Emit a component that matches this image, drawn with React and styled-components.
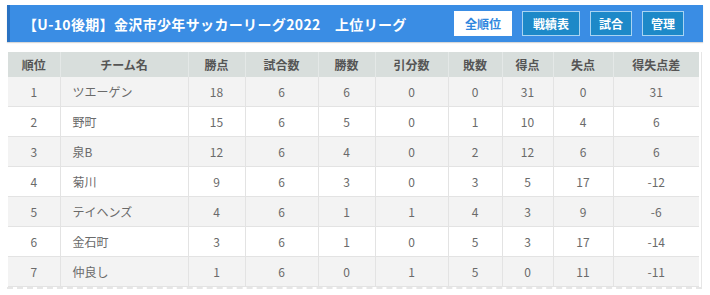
import React from "react";
import styled, { createGlobalStyle } from "styled-components";

const GlobalStyle = createGlobalStyle`
  html, body { margin: 0; padding: 0; background: #ffffff; }
  body { font-family: "Noto Sans CJK JP", "Noto Sans", sans-serif; }
`;

const Page = styled.div`
  padding: 5px 7px 0 7px;
  width: 696px;
`;

const HeaderBar = styled.div`
  display: flex;
  align-items: center;
  justify-content: space-between;
  height: 37px;
  box-sizing: border-box;
  background: #3a8de4;
  border-left: 3px solid #2a72c2;
  box-shadow: 0 1px 1px rgba(0, 0, 0, 0.15);
  padding: 0 19px 0 13px;
`;

const Title = styled.h1`
  margin: 0;
  font-size: 14px;
  font-weight: 700;
  color: #ffffff;
  letter-spacing: 0.35px;
  white-space: pre;
`;

const Nav = styled.div`
  display: flex;
  gap: 10px;
  align-items: center;
`;

const NavButton = styled.span`
  display: inline-flex;
  align-items: center;
  justify-content: center;
  height: 25px;
  box-sizing: border-box;
  padding: 0 ${(p) => (p.$short ? 8 : 10)}px;
  font-size: 12px;
  font-weight: 700;
  border: 1px solid ${(p) => (p.$active ? "#ffffff" : "#a9d4f2")};
  background: ${(p) => (p.$active ? "#ffffff" : "#1d89c8")};
  color: ${(p) => (p.$active ? "#2e86de" : "#ffffff")};
`;

const TableWrap = styled.div`
  margin-top: 10px;
  padding-left: 1px;
  border-right: 1px solid #e6e6e6;
  border-bottom: 2px dashed #e6e6e6;
  width: 695px;
  box-sizing: border-box;
`;

const Table = styled.table`
  width: 691px;
  border-collapse: collapse;
  table-layout: fixed;
  font-size: 12px;
`;

const HeadCell = styled.th`
  height: 25px;
  padding: 0;
  background: #d8dedc;
  color: #555;
  font-weight: 700;
  font-size: 12px;
  text-align: center;
  border-left: 1px solid #e4e8e7;
  &:first-child { border-left: none; }
`;

const Row = styled.tr`
  background: ${(p) => (p.$odd ? "#f3f3f3" : "#ffffff")};
  border-bottom: 1px solid #e3e3e3;
`;

const Cell = styled.td`
  height: 29px;
  padding: 0 ${(p) => (p.$left ? "12px" : "0")};
  color: #6a6a6a;
  text-align: ${(p) => (p.$left ? "left" : "center")};
  border-left: 1px solid #e3e3e3;
  &:first-child { border-left: none; }
`;

const columns = [
  { label: "順位", w: 52 },
  { label: "チーム名", w: 128 },
  { label: "勝点", w: 57 },
  { label: "試合数", w: 73 },
  { label: "勝数", w: 57 },
  { label: "引分数", w: 73 },
  { label: "敗数", w: 54 },
  { label: "得点", w: 51 },
  { label: "失点", w: 60 },
  { label: "得失点差", w: 86 },
];

const rows = [
  ["1", "ツエーゲン", "18", "6", "6", "0", "0", "31", "0", "31"],
  ["2", "野町", "15", "6", "5", "0", "1", "10", "4", "6"],
  ["3", "泉B", "12", "6", "4", "0", "2", "12", "6", "6"],
  ["4", "菊川", "9", "6", "3", "0", "3", "5", "17", "-12"],
  ["5", "テイヘンズ", "4", "6", "1", "1", "4", "3", "9", "-6"],
  ["6", "金石町", "3", "6", "1", "0", "5", "3", "17", "-14"],
  ["7", "仲良し", "1", "6", "0", "1", "5", "0", "11", "-11"],
];

export default function App() {
  return (
    <>
      <GlobalStyle />
      <Page>
        <HeaderBar>
          <Title>{"【U-10後期】金沢市少年サッカーリーグ2022　上位リーグ"}</Title>
          <Nav>
            <NavButton $active>全順位</NavButton>
            <NavButton>戦績表</NavButton>
            <NavButton $short>試合</NavButton>
            <NavButton $short>管理</NavButton>
          </Nav>
        </HeaderBar>
        <TableWrap>
          <Table>
            <colgroup>
              {columns.map((c) => (
                <col key={c.label} style={{ width: c.w }} />
              ))}
            </colgroup>
            <thead>
              <tr>
                {columns.map((c) => (
                  <HeadCell key={c.label}>{c.label}</HeadCell>
                ))}
              </tr>
            </thead>
            <tbody>
              {rows.map((r, i) => (
                <Row key={r[0]} $odd={i % 2 === 0}>
                  {r.map((v, j) => (
                    <Cell key={j} $left={j === 1}>
                      {v}
                    </Cell>
                  ))}
                </Row>
              ))}
            </tbody>
          </Table>
        </TableWrap>
      </Page>
    </>
  );
}
